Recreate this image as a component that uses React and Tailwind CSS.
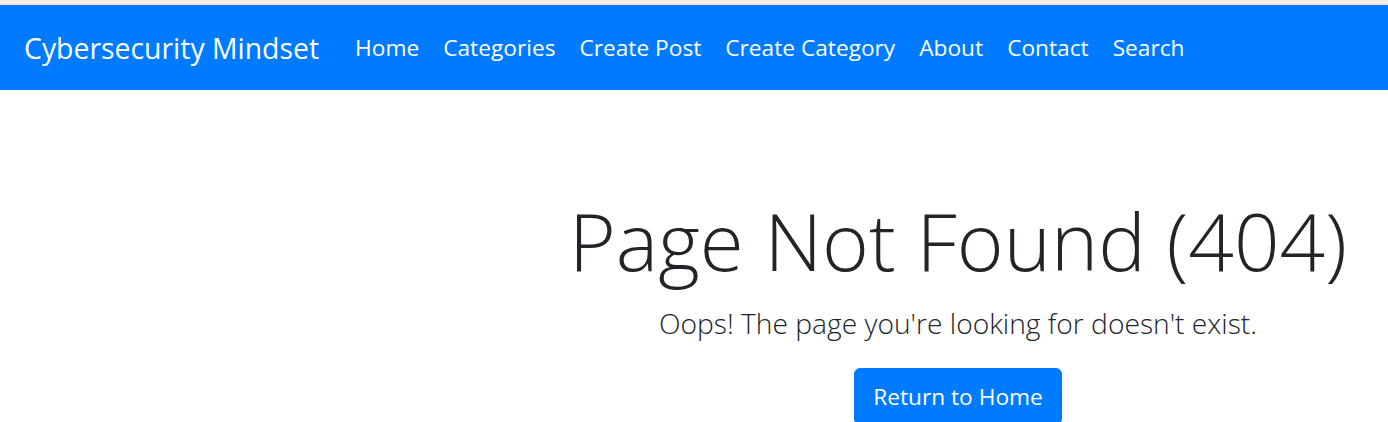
import React from 'react';

const links = ['Home', 'Categories', 'Create Post', 'Create Category', 'About', 'Contact', 'Search'];

function Navbar() {
  return (
    <nav className="flex items-center bg-[#007bff] px-6 py-3">
      <a href="#" className="mr-6 py-[7px] text-[28.4px] leading-[46px] text-white">
        Cybersecurity Mindset
      </a>
      <ul className="flex">
        {links.map((l) => (
          <li key={l}>
            <a href="#" className="block px-3 pt-[13px] pb-3 text-[22.7px] leading-[36px] text-white">
              {l}
            </a>
          </li>
        ))}
      </ul>
    </nav>
  );
}

export default function App() {
  return (
    <div className="min-h-screen bg-white font-['Segoe_UI','Open_Sans','Noto_Sans',sans-serif] text-[#212529]">
      <div className="h-[4px] bg-[#fcefe9]" />
      <div className="h-px bg-[#efe0d8]" />
      <Navbar />
      <main className="grid grid-cols-[528px_1fr]">
        <div />
        <div className="pt-[102px] text-center">
          <h1 className="text-[80px] font-light leading-[96px]">Page Not Found (404)</h1>
          <p className="mt-[14px] text-[28.2px] font-light leading-[42px]">
            Oops! The page you're looking for doesn't exist.
          </p>
          <a
            href="#"
            className="mt-6 inline-block rounded-[6px] border border-[#007bff] bg-[#007bff] px-[18px] py-[9px] text-[22.7px] leading-[37px] text-white"
          >
            Return to Home
          </a>
        </div>
      </main>
    </div>
  );
}
